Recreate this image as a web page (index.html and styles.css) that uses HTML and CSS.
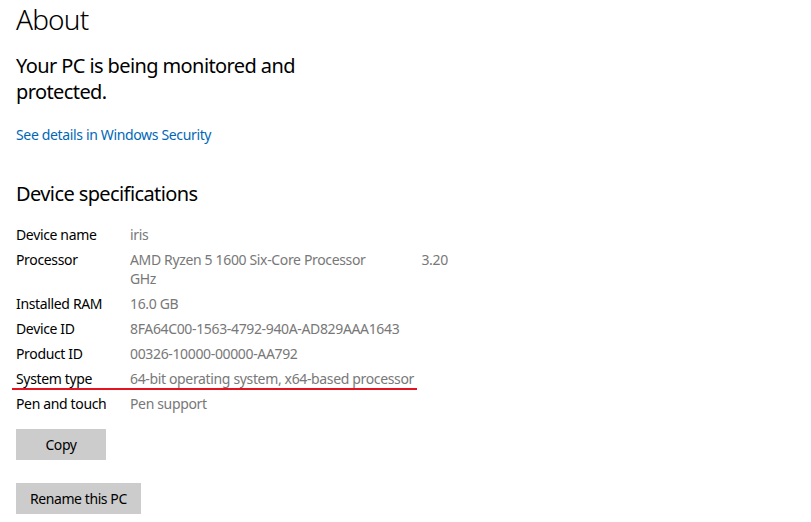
FILE: index.html
```html
<!DOCTYPE html>
<html lang="en">
<head>
<meta charset="utf-8">
<title>About</title>
<link rel="stylesheet" href="styles.css">
</head>
<body>
<main class="page">
  <h1 class="title">About</h1>
  <p class="subtitle">Your PC is being monitored and protected.</p>
  <a class="link" href="#">See details in Windows Security</a>

  <h2 class="section">Device specifications</h2>
  <dl class="specs">
    <div class="row"><dt>Device name</dt><dd>iris</dd></div>
    <div class="row"><dt>Processor</dt><dd class="wrap">AMD Ryzen 5 1600 Six-Core Processor                 3.20 GHz</dd></div>
    <div class="row"><dt>Installed RAM</dt><dd>16.0 GB</dd></div>
    <div class="row"><dt>Device ID</dt><dd>8FA64C00-1563-4792-940A-AD829AAA1643</dd></div>
    <div class="row"><dt>Product ID</dt><dd>00326-10000-00000-AA792</dd></div>
    <div class="row marked"><dt>System type</dt><dd>64-bit operating system, x64-based processor</dd></div>
    <div class="row"><dt>Pen and touch</dt><dd>Pen support</dd></div>
  </dl>

  <div class="actions">
    <button class="btn" type="button">Copy</button>
    <button class="btn" type="button">Rename this PC</button>
  </div>
</main>
</body>
</html>
```
FILE: styles.css
```css
* { box-sizing: border-box; }
html, body { margin: 0; padding: 0; background: #ffffff; }
body {
  font-family: "Noto Sans", "Open Sans", sans-serif;
  color: #000000;
  width: 811px;
  height: 522px;
  overflow: hidden;
}
.page {
  display: flex;
  flex-direction: column;
  align-items: flex-start;
  padding-left: 16px;
}
.title {
  margin: 0;
  font-size: 28px;
  line-height: 38px;
  font-weight: 300;
  letter-spacing: -0.03em;
}
.subtitle {
  margin: 15px 0 0;
  width: 300px;
  font-size: 20px;
  line-height: 26px;
  letter-spacing: -0.03em;
}
.link {
  margin-top: 20px;
  font-size: 14px;
  line-height: 19px;
  color: #0067b8;
  text-decoration: none;
  letter-spacing: -0.025em;
}
.section {
  margin: 37px 0 0;
  font-size: 20px;
  line-height: 26px;
  font-weight: 400;
  letter-spacing: -0.03em;
}
.specs {
  margin: 18px 0 0;
  display: flex;
  flex-direction: column;
  gap: 6px;
  font-size: 14px;
  line-height: 19px;
  letter-spacing: -0.025em;
}
.row {
  display: flex;
  position: relative;
}
.row dt { width: 114px; flex: none; }
.row dd { margin: 0; color: #787878; white-space: nowrap; }
.row dd.wrap { white-space: pre-wrap; width: 322px; }
.row.marked::after {
  content: "";
  position: absolute;
  left: -4px;
  top: 19px;
  width: 405px;
  height: 2px;
  background: #e51220;
}
.actions {
  margin-top: 16px;
  display: flex;
  flex-direction: column;
  align-items: flex-start;
  gap: 23px;
}
.btn {
  font-family: inherit;
  font-size: 14px;
  line-height: 19px;
  letter-spacing: -0.03em;
  color: #000;
  background: #cccccc;
  border: 0;
  border-radius: 0;
  min-width: 90px;
  height: 31px;
  padding: 0 14px;
}
```
